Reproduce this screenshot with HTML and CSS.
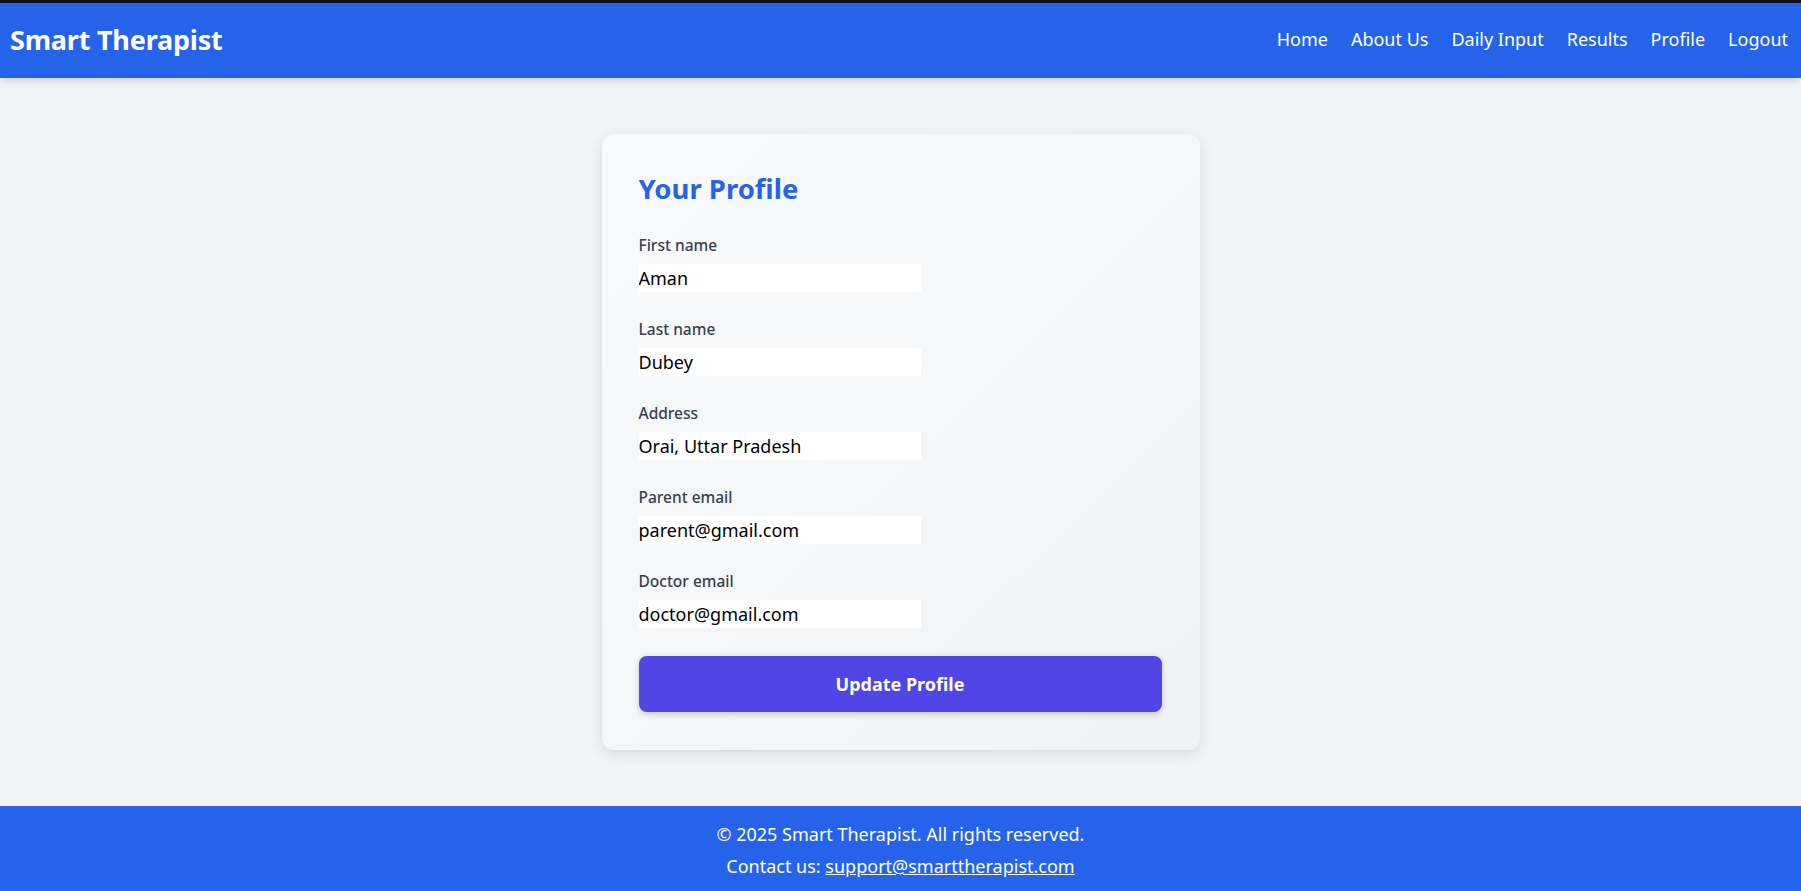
FILE: index.html
```html
<!DOCTYPE html>
<html lang="en">
<head>
<meta charset="utf-8">
<title>Smart Therapist - Profile</title>
<link rel="stylesheet" href="styles.css">
</head>
<body>
<div class="page">
  <header class="topbar">
    <div class="brand">Smart Therapist</div>
    <nav class="nav">
      <a href="#">Home</a>
      <a href="#">About Us</a>
      <a href="#">Daily Input</a>
      <a href="#">Results</a>
      <a href="#">Profile</a>
      <a href="#">Logout</a>
    </nav>
  </header>
  <main class="main">
    <section class="card">
      <h2 class="card-title">Your Profile</h2>
      <form class="form">
        <div class="field">
          <label class="label">First name</label>
          <input class="input" type="text" value="Aman">
        </div>
        <div class="field">
          <label class="label">Last name</label>
          <input class="input" type="text" value="Dubey">
        </div>
        <div class="field">
          <label class="label">Address</label>
          <input class="input" type="text" value="Orai, Uttar Pradesh">
        </div>
        <div class="field">
          <label class="label">Parent email</label>
          <input class="input" type="text" value="parent@gmail.com">
        </div>
        <div class="field">
          <label class="label">Doctor email</label>
          <input class="input" type="text" value="doctor@gmail.com">
        </div>
        <button class="btn" type="button">Update Profile</button>
      </form>
    </section>
  </main>
  <footer class="footer">
    <p class="foot-line">© 2025 Smart Therapist. All rights reserved.</p>
    <p class="foot-line">Contact us: <a href="#" class="foot-link">support@smarttherapist.com</a></p>
  </footer>
</div>
</body>
</html>
```

FILE: styles.css
```css
* { box-sizing: border-box; }
html, body { margin: 0; padding: 0; }
body {
  font-family: "Noto Sans", "Open Sans", sans-serif;
  background: #f3f4f6;
  color: #111827;
}
.page {
  min-height: 891px;
  display: flex;
  flex-direction: column;
  border-top: 3px solid #111;
}
.topbar {
  height: 75px;
  background: #2563eb;
  display: flex;
  align-items: center;
  justify-content: space-between;
  padding: 0 13px 0 10px;
  box-shadow: 0 3px 8px rgba(0,0,0,0.15);
  position: relative;
  z-index: 2;
}
.brand {
  color: #fff;
  font-weight: 700;
  font-size: 27px;
  letter-spacing: -0.2px;
  margin-top: -2px;
}
.nav {
  display: flex;
  gap: 23px;
  margin-top: -4px;
}
.nav a {
  color: #fff;
  text-decoration: none;
  font-size: 18px;
}
.main {
  flex: 1;
  display: flex;
  justify-content: center;
  align-items: flex-start;
  padding: 56px 0 56px;
}
.card {
  width: 598px;
  background: linear-gradient(135deg, #f9fafb 0%, #f1f2f4 100%);
  border-radius: 12px;
  box-shadow: 0 4px 14px rgba(0,0,0,0.12);
  padding: 38px 38px 38px 37px;
}
.card-title {
  margin: 0 0 30px;
  color: #2563eb;
  font-size: 27.5px;
  line-height: 34px;
  font-weight: 700;
}
.form { display: flex; flex-direction: column; }
.field {
  display: flex;
  flex-direction: column;
  align-items: flex-start;
  margin-bottom: 28px;
}
.label {
  font-size: 15.5px;
  line-height: 18px;
  font-weight: 500;
  color: #374151;
  margin-bottom: 10px;
}
.input {
  width: 282px;
  height: 28px;
  border: none;
  outline: none;
  background: #fff;
  padding: 0;
  font-family: inherit;
  font-size: 18px;
  color: #000;
}
.btn {
  height: 56px;
  width: 100%;
  border: none;
  border-radius: 8px;
  background: #4f46e5;
  color: #fff;
  font-family: inherit;
  font-size: 18px;
  font-weight: 700;
  box-shadow: 0 2px 6px rgba(0,0,0,0.2);
  cursor: pointer;
}
.footer {
  height: 85px;
  background: #2563eb;
  color: #fff;
  text-align: center;
  padding-top: 12px;
}
.foot-line {
  margin: 0;
  font-size: 18px;
  line-height: 32px;
}
.foot-link { color: #fff; }
```
